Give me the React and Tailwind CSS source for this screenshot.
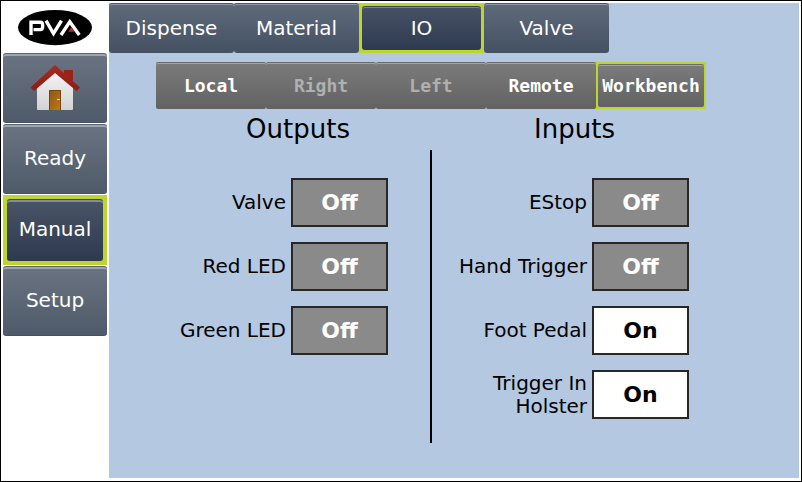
const SANS = "font-['DejaVu_Sans','Verdana',sans-serif]";

function Logo() {
  return (
    <svg className="block h-[52px] w-[108px]" viewBox="1 1 108 52" aria-label="PVA">
      <ellipse cx="55" cy="27.6" rx="37" ry="17.6" fill="#000" />
      <g fill="none" stroke="#fff" strokeWidth="3.4">
        <path d="M31 35V22.3H40.500Q42.700 22.300 42.700 25.800Q42.700 29.600 40.500 29.600H33.500" />
        <path d="M46 20.700L53.500 33.500L61.500 20.700" />
        <path d="M61 35L69.800 21.800L79.300 35" />
      </g>
      <path d="M71.200 27L74.600 31.800H68.500Z" fill="#d0202e" />
    </svg>
  );
}

function House() {
  return (
    <svg className="block h-[50px] w-[52px]" viewBox="29 62 52 50" aria-label="Home">
      <defs>
        <linearGradient id="wall" x1="0" y1="0" x2="0" y2="1">
          <stop offset="0" stopColor="#f6f6f6" />
          <stop offset="1" stopColor="#d2d2d2" />
        </linearGradient>
        <linearGradient id="roof" x1="0" y1="0" x2="0" y2="1">
          <stop offset="0" stopColor="#a82a20" />
          <stop offset="1" stopColor="#8c1c14" />
        </linearGradient>
        <linearGradient id="door" x1="0" y1="0" x2="1" y2="1">
          <stop offset="0" stopColor="#8e560c" />
          <stop offset="1" stopColor="#bd7a22" />
        </linearGradient>
      </defs>
      <path d="M64 70H73V82H64Z" fill="#98231b" />
      <path d="M37 85L55 70L73 85V109Q73 110 72 110H38Q37 110 37 109Z" fill="url(#wall)" />
      <path d="M55 65L80 87.500L76.500 91L55 73L34 91L30.500 87.500Z" fill="url(#roof)" />
      <path d="M49 90H61V110H49Z" fill="url(#door)" />
      <path d="M49.500 110V90.500H60.500V110" fill="none" stroke="#774606" />
      <path d="M57 99.500H60" stroke="#f4d48a" />
    </svg>
  );
}

function SideButton({ active, children }) {
  return (
    <button
      className={
        active
          ? "h-[70px] w-[104px] bg-[#bdd62e] p-1"
          : "h-[70px] w-[104px]"
      }
    >
      <span
        className={
          "flex h-full w-full items-center justify-center rounded-[3px] border-t border-b pb-[2px] text-[20px] leading-none text-white " +
          (active
            ? "border-t-[#3d4657] border-b-[#2c374a] bg-linear-to-b from-[#4a5467] to-[#2e3a4f] shadow-[inset_0_2px_0_#858c9a]"
            : "border-t-[#5d6673] border-b-[#465261] bg-linear-to-b from-[#6a7382] to-[#4f5b6a] shadow-[inset_0_2px_0_#9da5b0]")
        }
      >
        {children}
      </span>
    </button>
  );
}

function TopTab({ active, children }) {
  return (
    <button className={active ? "h-[50px] w-[125px] bg-[#bdd62e] p-[3px] pb-[3px]" : "h-[50px] w-[125px]"}>
      <span
        className={
          "flex h-full w-full items-center justify-center rounded-[3px] border-t pb-[1px] text-[20px] leading-none text-white " +
          (active
            ? "border-t-[#3d4657] bg-linear-to-b from-[#485266] to-[#2e3a4f] shadow-[inset_0_1px_0_#7e8797]"
            : "border-t-[#4b5768] bg-linear-to-b from-[#5f6b7b] to-[#445163] shadow-[inset_0_1px_0_#8f9bac]")
        }
      >
        {children}
      </span>
    </button>
  );
}

function SubTab({ active, disabled, children }) {
  return (
    <button className={active ? "h-[47px] w-[110px] bg-[#bdd62e] p-[2px]" : "h-[47px] w-[110px]"} disabled={disabled}>
      <span
        className={
          "flex h-full w-full items-center justify-center rounded-[2px] border-t border-t-[#6b6b6b] bg-linear-to-b from-[#7b7b7b] to-[#626262] font-['DejaVu_Sans_Mono',monospace] text-[18px] leading-none font-bold shadow-[inset_0_1px_0_#a4a4a4] " +
          (disabled ? "text-[#b0b0b0]" : "text-white")
        }
      >
        {children}
      </span>
    </button>
  );
}

function SignalRow({ label, on }) {
  return (
    <div className="flex h-[49px] items-center justify-end gap-[5px]">
      <span className="text-right text-[20px] leading-[23px] whitespace-pre-line text-black">{label}</span>
      <span
        className={
          "flex h-[49px] w-[97px] items-center justify-center border-2 border-[#272727] text-[22px] leading-none font-bold " +
          (on ? "bg-white text-black" : "bg-[#8a8a8a] text-white")
        }
      >
        {on ? "On" : "Off"}
      </span>
    </div>
  );
}

export default function App() {
  return (
    <div className={"flex h-[482px] w-[802px] overflow-hidden border border-black bg-white " + SANS}>
      <nav className="flex w-[108px] shrink-0 flex-col">
        <Logo />
        <div className="flex flex-col gap-px pl-[2px]">
          <SideButton><House /></SideButton>
          <SideButton>Ready</SideButton>
          <SideButton active>Manual</SideButton>
          <SideButton>Setup</SideButton>
        </div>
      </nav>
      <main className="mt-[2px] h-[475px] w-[690px] bg-[#b5c8e1]">
        <div className="flex">
          <TopTab>Dispense</TopTab>
          <TopTab>Material</TopTab>
          <TopTab active>IO</TopTab>
          <TopTab>Valve</TopTab>
        </div>
        <div className="mt-[9px] ml-[47px] flex">
          <SubTab>Local</SubTab>
          <SubTab disabled>Right</SubTab>
          <SubTab disabled>Left</SubTab>
          <SubTab>Remote</SubTab>
          <SubTab active>Workbench</SubTab>
        </div>
        <div className="flex">
          <section className="w-[279px]">
            <h2 className="mt-[5px] pl-[99px] text-center text-[26px] leading-[30px] text-black">Outputs</h2>
            <div className="mt-[34px] flex flex-col gap-[15px]">
              <SignalRow label="Valve" />
              <SignalRow label="Red LED" />
              <SignalRow label="Green LED" />
            </div>
          </section>
          <div className="mt-[41px] ml-[42px] h-[293px] w-[2px] bg-black" />
          <section className="w-[257px]">
            <h2 className="mt-[5px] pl-[28px] text-center text-[26px] leading-[30px] text-black">Inputs</h2>
            <div className="mt-[34px] flex flex-col gap-[15px]">
              <SignalRow label="EStop" />
              <SignalRow label="Hand Trigger" />
              <SignalRow label="Foot Pedal" on />
              <SignalRow label={"Trigger In\nHolster"} on />
            </div>
          </section>
        </div>
      </main>
    </div>
  );
}
